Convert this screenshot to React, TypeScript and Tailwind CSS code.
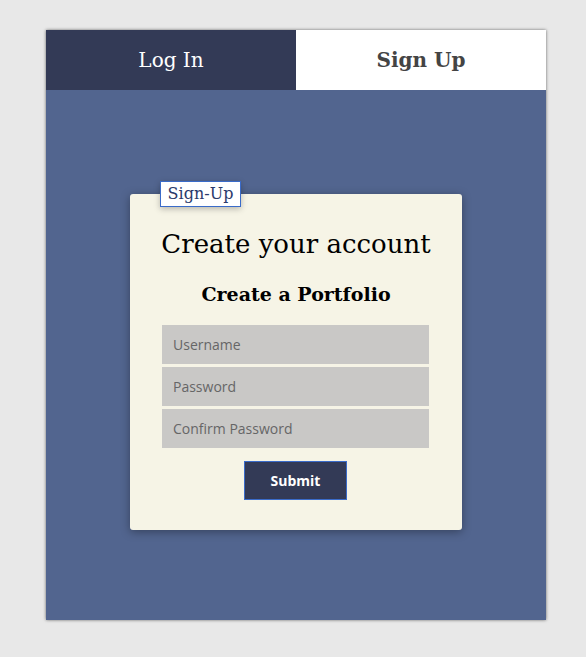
import React from "react";

export default function App() {
  const serif = { fontFamily: '"DejaVu Serif", serif' };
  const sans = { fontFamily: '"Open Sans", "Noto Sans", sans-serif' };
  return (
    <div className="min-h-[657px] w-full bg-[#e8e8e8] pt-[30px]">
      <div className="ml-[46px] w-[500px] shadow-[0_0_3px_rgba(0,0,0,0.55)]">
        <div className="flex h-[60px]" style={serif}>
          <div className="flex flex-1 items-center justify-center bg-[#333a56] text-[20px] text-white">
            Log In
          </div>
          <div className="flex flex-1 items-center justify-center bg-white text-[20px] font-bold text-[#444444]">
            Sign Up
          </div>
        </div>
        <div className="bg-[#52658f] pt-[104px] pb-[90px]">
          <div className="relative mx-auto w-[332px] rounded-[3px] bg-[#f6f4e6] pt-[35px] pb-[30px] shadow-[0_2px_10px_rgba(0,0,0,0.35)]">
            <div
              className="absolute left-[30px] top-[-13px] flex h-[26px] w-[81px] items-center justify-center border border-[#3a6bc9] bg-white text-[16px] text-[#2b3a6b] shadow-[0_2px_6px_rgba(0,0,0,0.25)]"
              style={serif}
            >
              Sign-Up
            </div>
            <h1 className="text-center text-[26px] leading-[30px] text-black" style={serif}>
              Create your account
            </h1>
            <h2 className="mt-[23px] text-center text-[19px] font-bold leading-[24px] text-black" style={serif}>
              Create a Portfolio
            </h2>
            <div className="ml-[32px] mt-[19px] flex w-[267px] flex-col gap-[3px]" style={sans}>
              {["Username", "Password", "Confirm Password"].map((p) => (
                <input
                  key={p}
                  placeholder={p}
                  type={p === "Username" ? "text" : "password"}
                  className="h-[39px] w-full bg-[#c9c8c6] px-[11px] text-[14px] text-[#555] outline-none placeholder:text-[#666]"
                />
              ))}
            </div>
            <div className="mt-[13px] flex pl-[114px]">
              <button
                className="h-[39px] w-[103px] border border-[#3a6bc9] bg-[#333a56] text-[14px] font-bold text-white"
                style={sans}
              >
                Submit
              </button>
            </div>
          </div>
        </div>
      </div>
    </div>
  );
}
